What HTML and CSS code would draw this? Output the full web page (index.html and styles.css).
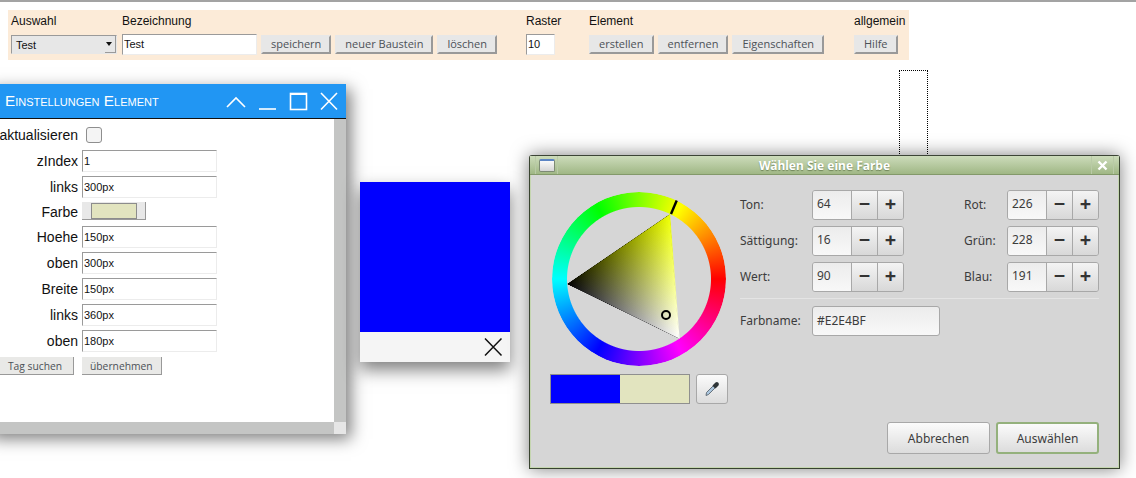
FILE: index.html
```html
<!DOCTYPE html>
<html lang="de">
<head>
    <meta charset="UTF-8">
    <title>Baustein Editor</title>
    <link rel="stylesheet" href="styles.css">
</head>
<body>
    <div class="toolbar">
        <div class="tool-group group-select">
            <label class="tool-label">Auswahl</label>
            <div class="fake-select">Test<span class="select-arrow"></span></div>
        </div>
        <div class="tool-group group-name">
            <label class="tool-label">Bezeichnung</label>
            <div class="tool-row">
                <input class="tool-input name-input" type="text" value="Test">
                <button class="tool-btn">speichern</button>
                <button class="tool-btn">neuer Baustein</button>
                <button class="tool-btn">löschen</button>
            </div>
        </div>
        <div class="tool-group group-raster">
            <label class="tool-label">Raster</label>
            <input class="tool-input raster-input" type="text" value="10">
        </div>
        <div class="tool-group group-element">
            <label class="tool-label">Element</label>
            <div class="tool-row">
                <button class="tool-btn">erstellen</button>
                <button class="tool-btn">entfernen</button>
                <button class="tool-btn">Eigenschaften</button>
            </div>
        </div>
        <div class="tool-group">
            <label class="tool-label">allgemein</label>
            <button class="tool-btn">Hilfe</button>
        </div>
    </div>

    <div class="dotted-box"></div>

    <div class="settings-win">
        <div class="settings-title">
            <span class="settings-name">Einstellungen Element</span>
            <svg class="win-icons" width="118" height="24" viewBox="0 0 118 24" fill="none" stroke="#fff" stroke-width="1.6">
                <path d="M7 18 L16 9 L25 18"/>
                <path d="M39 20 H56"/>
                <rect x="70.5" y="4.5" width="16" height="16"/>
                <path d="M70.5 5 H86.5" stroke-width="2"/>
                <path d="M101 4 L117 20.5 M117 4 L101 20.5"/>
            </svg>
        </div>
        <div class="settings-main">
            <div class="settings-body">
                <div class="prop-row row-first"><span class="prop-label">aktualisieren</span><span class="fake-check"></span></div>
                <div class="prop-row"><span class="prop-label">zIndex</span><input class="prop-input" type="text" value="1"></div>
                <div class="prop-row"><span class="prop-label">links</span><input class="prop-input" type="text" value="300px"></div>
                <div class="prop-row row-color"><span class="prop-label">Farbe</span><span class="color-btn"><span class="color-fill"></span></span></div>
                <div class="prop-row"><span class="prop-label">Hoehe</span><input class="prop-input" type="text" value="150px"></div>
                <div class="prop-row"><span class="prop-label">oben</span><input class="prop-input" type="text" value="300px"></div>
                <div class="prop-row"><span class="prop-label">Breite</span><input class="prop-input" type="text" value="150px"></div>
                <div class="prop-row"><span class="prop-label">links</span><input class="prop-input" type="text" value="360px"></div>
                <div class="prop-row"><span class="prop-label">oben</span><input class="prop-input" type="text" value="180px"></div>
                <div class="prop-actions">
                    <button class="flat-btn tag-btn">Tag suchen</button>
                    <button class="flat-btn">übernehmen</button>
                </div>
            </div>
            <div class="scroll-v"></div>
        </div>
        <div class="scroll-h"><span class="scroll-corner"></span></div>
    </div>

    <div class="element-win">
        <div class="element-color"></div>
        <div class="element-foot">
            <svg width="20" height="20" viewBox="0 0 20 20" fill="none" stroke="#111" stroke-width="1.5"><path d="M2 1.5 L18.5 18.5 M18.5 1.5 L2 18.5"/></svg>
        </div>
    </div>

    <div class="color-dialog">
        <div class="dialog-title">
            <span class="dialog-iconbox"><span class="dialog-appicon"></span></span>
            <span class="dialog-name">Wählen Sie eine Farbe</span>
            <span class="dialog-close">
                <svg width="11" height="11" viewBox="0 0 11 11" fill="none" stroke="#fff" stroke-width="2.4"><path d="M1.5 1.5 L9.5 9.5 M9.5 1.5 L1.5 9.5"/></svg>
            </span>
        </div>
        <div class="dialog-body">
            <div class="dialog-top">
                <div class="wheel-col">
                    <div class="wheel">
                        <div class="wheel-ring"></div>
                        <svg class="wheel-svg" width="174" height="174" viewBox="552 192 174 174">
                            <defs>
                                <linearGradient id="hueFade" gradientUnits="userSpaceOnUse" x1="669.5" y1="214.5" x2="622.4" y2="310.8">
                                    <stop offset="0" stop-color="#eeff00"/>
                                    <stop offset="1" stop-color="#000"/>
                                </linearGradient>
                                <linearGradient id="whiteFade" gradientUnits="userSpaceOnUse" x1="679" y1="338.5" x2="618.3" y2="249.4">
                                    <stop offset="0" stop-color="#fff"/>
                                    <stop offset="1" stop-color="#000"/>
                                </linearGradient>
                                <linearGradient id="edgeFade" gradientUnits="userSpaceOnUse" x1="669.5" y1="214.5" x2="679" y2="338.5">
                                    <stop offset="0" stop-color="#eeff00"/>
                                    <stop offset="1" stop-color="#fff"/>
                                </linearGradient>
                            </defs>
                            <g class="tri-group">
                                <polygon points="669.5,214.5 567.5,284 679,338.5" fill="url(#hueFade)"/>
                                <polygon class="plus-layer" points="669.5,214.5 567.5,284 679,338.5" fill="url(#whiteFade)"/>
                            </g>
                            <path d="M669.5 214.5 L679 338.5" stroke="url(#edgeFade)" stroke-width="1.2" fill="none"/>
                            <path d="M676.7 200.5 L671 214" stroke="#000" stroke-width="2.4"/>
                            <circle cx="666" cy="315" r="4" fill="none" stroke="#000" stroke-width="2"/>
                        </svg>
                    </div>
                    <div class="preview-row">
                        <div class="preview"><span class="preview-old"></span><span class="preview-new"></span></div>
                        <button class="gtk-btn picker-btn">
                            <svg width="18" height="18" viewBox="0 0 18 18">
                                <path d="M3 15.5 L3.5 12.5 L10 6 L12 8 L5.5 14.5 Z" fill="#a9c4dc" stroke="#5b6670" stroke-width="0.9"/>
                                <path d="M9.5 5.5 L12.5 2.5 Q14 1.5 15.3 2.7 Q16.5 4 15.5 5.5 L12.5 8.5 Z" fill="#2e3436"/>
                            </svg>
                        </button>
                    </div>
                </div>
                <div class="fields">
                    <div class="spin-grid">
                        <span class="field-label">Ton:</span>
                        <div class="spin"><span class="spin-value">64</span><span class="spin-btn">−</span><span class="spin-btn">+</span></div>
                        <span class="field-label label-right">Rot:</span>
                        <div class="spin"><span class="spin-value">226</span><span class="spin-btn">−</span><span class="spin-btn">+</span></div>
                        <span class="field-label">Sättigung:</span>
                        <div class="spin"><span class="spin-value">16</span><span class="spin-btn">−</span><span class="spin-btn">+</span></div>
                        <span class="field-label label-right">Grün:</span>
                        <div class="spin"><span class="spin-value">228</span><span class="spin-btn">−</span><span class="spin-btn">+</span></div>
                        <span class="field-label">Wert:</span>
                        <div class="spin"><span class="spin-value">90</span><span class="spin-btn">−</span><span class="spin-btn">+</span></div>
                        <span class="field-label label-right">Blau:</span>
                        <div class="spin"><span class="spin-value">191</span><span class="spin-btn">−</span><span class="spin-btn">+</span></div>
                    </div>
                    <div class="field-sep"></div>
                    <div class="name-row">
                        <span class="field-label">Farbname:</span>
                        <span class="name-field">#E2E4BF</span>
                    </div>
                </div>
            </div>
            <div class="dialog-actions">
                <button class="gtk-btn action-btn">Abbrechen</button>
                <button class="gtk-btn action-btn action-default">Auswählen</button>
            </div>
        </div>
    </div>
</body>
</html>
```
FILE: styles.css
```css
html, body {
    margin: 0;
    padding: 0;
    height: 478px;
    overflow: hidden;
}
body {
    position: relative;
    background-color: #fff;
    font-family: "Liberation Sans", Arial, sans-serif;
    border-top: 2px solid #a3a3a3;
    box-sizing: border-box;
}

/* toolbar */
.toolbar {
    display: flex;
    width: 901px;
    height: 50px;
    margin: 8px 0 0 8px;
    background-color: #fcebd8;
    color: #111;
    font-size: 12px;
}
.tool-group {
    display: flex;
    flex-direction: column;
    align-items: flex-start;
    padding-top: 4px;
}
.group-select { width: 114px; padding-left: 3px; box-sizing: border-box; }
.group-name { width: 404px; }
.group-raster { width: 63px; }
.group-element { width: 265px; }
.tool-label {
    height: 17px;
    line-height: 14px;
    margin-bottom: 3px;
}
.tool-row {
    display: flex;
    gap: 4px;
    align-items: flex-start;
}
.fake-select {
    position: relative;
    width: 106px;
    height: 19px;
    margin-top: 1px;
    padding-left: 4px;
    box-sizing: border-box;
    background-color: #e7e7e7;
    border: 1px solid;
    border-color: #9a9a9a #e7e7e7 #e7e7e7 #9a9a9a;
    line-height: 18px;
    font-size: 11px;
}
.select-arrow {
    position: absolute;
    right: 0;
    top: 0;
    width: 11px;
    height: 17px;
    background-color: #e7e7e7;
    border-right: 1px solid #9a9a9a;
    border-bottom: 1px solid #9a9a9a;
    box-sizing: border-box;
}
.select-arrow::after {
    content: "";
    position: absolute;
    left: 1px;
    top: 6px;
    border: 3px solid transparent;
    border-top: 4px solid #111;
    border-bottom: 0;
}
.tool-input {
    box-sizing: border-box;
    height: 21px;
    padding: 0 1px 1px;
    background-color: #fff;
    border: 1px solid;
    border-color: #9a9a9a #ececec #ececec #9a9a9a;
    font-family: inherit;
    font-size: 11px;
    color: #111;
    outline: none;
}
.name-input { width: 135px; }
.raster-input { width: 29px; }
.tool-btn {
    height: 19px;
    margin-top: 1px;
    padding: 0 8px 1px;
    background-color: #e7e7e7;
    border: 2px solid;
    border-color: #e7e7e7 #999 #999 #e7e7e7;
    font-family: "Open Sans", sans-serif;
    font-size: 11px;
    line-height: 14px;
    color: #4c5157;
}

/* dotted placeholder behind the dialog */
.dotted-box {
    position: absolute;
    left: 899px;
    top: 68px;
    width: 27px;
    height: 100px;
    border: 1px dotted #000;
}

/* settings window */
.settings-win {
    position: absolute;
    left: -14px;
    top: 82px;
    width: 360px;
    height: 350px;
    background-color: #fff;
    box-shadow: 5px 5px 15px rgba(0, 0, 0, 0.5);
}
.settings-title {
    display: flex;
    align-items: center;
    justify-content: space-between;
    height: 35px;
    padding: 0 8px 0 19px;
    background-color: #2196f3;
    border-bottom: 1px solid #111;
    box-sizing: border-box;
    color: #fff;
}
.settings-name {
    font-size: 15.3px;
    font-variant: small-caps;
}
.settings-main {
    display: flex;
    height: 303px;
}
.settings-body {
    flex: 1;
    padding-top: 2px;
    color: #111;
}
.scroll-v {
    width: 12px;
    background-color: #c4c5c4;
}
.scroll-h {
    display: flex;
    justify-content: flex-end;
    height: 12px;
    background-color: #c4c5c4;
}
.scroll-corner {
    width: 12px;
    background-color: #e6e6e6;
}
.prop-row {
    display: flex;
    align-items: center;
    height: 26px;
}
.row-first { height: 27px; }
.row-color { height: 24px; }
.prop-label {
    width: 92px;
    margin-right: 4px;
    text-align: right;
    font-size: 14px;
}
.prop-input {
    box-sizing: border-box;
    width: 135px;
    height: 22px;
    padding: 0 1px;
    background-color: #fff;
    border: 1px solid;
    border-color: #9a9a9a #ececec #ececec #9a9a9a;
    font-family: inherit;
    font-size: 11px;
    color: #111;
    outline: none;
}
.fake-check {
    width: 14px;
    height: 14px;
    margin-left: 4px;
    background-color: #f4f4f4;
    border: 1px solid #8e8e8e;
    border-radius: 3px;
}
.color-btn {
    display: flex;
    align-items: center;
    justify-content: center;
    box-sizing: border-box;
    width: 64px;
    height: 18px;
    margin-bottom: 2px;
    background-color: #e8e8e8;
    border-right: 1px solid #999;
    border-bottom: 1px solid #999;
}
.color-fill {
    box-sizing: border-box;
    width: 46px;
    height: 16px;
    background-color: #e2e4bf;
    border: 1px solid #8c8c8c;
}
.prop-actions {
    display: flex;
    gap: 8px;
    margin: 3px 0 0 0;
    padding-left: 11px;
}
.flat-btn {
    height: 18px;
    padding: 0 8px;
    background-color: #e9e9e7;
    border: 0;
    border-right: 1px solid #999;
    border-bottom: 1px solid #999;
    font-family: "Open Sans", sans-serif;
    font-size: 10.3px;
    color: #4c5157;
}
.tag-btn { width: 77px; padding: 0; }

/* the element being edited */
.element-win {
    position: absolute;
    left: 360px;
    top: 180px;
    width: 150px;
    height: 180px;
    box-shadow: 0 8px 16px rgba(0, 0, 0, 0.5);
}
.element-color {
    height: 150px;
    background-color: #00f;
}
.element-foot {
    display: flex;
    justify-content: flex-end;
    align-items: center;
    height: 30px;
    padding-right: 7px;
    background-color: #f5f5f5;
}

/* colour dialog */
.color-dialog {
    position: absolute;
    left: 529px;
    top: 153px;
    box-sizing: border-box;
    width: 591px;
    height: 314px;
    background-color: #d6d6d6;
    border: 1px solid #38432f;
    border-top-color: #3c4436;
    border-radius: 3px 3px 0 0;
    box-shadow: 0 0 18px rgba(0, 0, 0, 0.5), inset 0 0 0 1px #c5d6b0;
    font-family: "Noto Sans", sans-serif;
    font-size: 12px;
    color: #3c3c3c;
}
.dialog-title {
    display: flex;
    align-items: center;
    position: relative;
    height: 18px;
    background: linear-gradient(#cddcbb, #a0b785);
    border-bottom: 1px solid #83996a;
}
.dialog-iconbox {
    display: flex;
    align-items: center;
    justify-content: center;
    box-sizing: border-box;
    width: 23px;
    height: 18px;
    margin-left: 5px;
    border-left: 1px solid #b9caa6;
    border-right: 1px solid #b9caa6;
}
.dialog-appicon {
    box-sizing: border-box;
    width: 16px;
    height: 13px;
    background: linear-gradient(#fafafa, #d6d6d6);
    border: 1px solid #7d8a74;
    border-top: 2px solid #5b84c4;
    border-radius: 2px;
}
.dialog-name {
    position: absolute;
    left: 0;
    right: 0;
    text-align: center;
    font-weight: bold;
    font-size: 12px;
    color: #fff;
    text-shadow: 0 1px 1px #6f8458;
}
.dialog-close {
    display: flex;
    align-items: center;
    justify-content: center;
    position: absolute;
    right: 5px;
    top: 0;
    width: 23px;
    height: 18px;
    border-left: 1px solid #b9caa6;
    border-right: 1px solid #b9caa6;
    box-sizing: border-box;
}
.dialog-body {
    display: flex;
    flex-direction: column;
    height: 293px;
}
.dialog-top {
    display: flex;
    height: 244px;
}
.wheel-col {
    width: 210px;
    padding: 17px 0 0 22px;
    box-sizing: border-box;
}
.wheel {
    position: relative;
    width: 174px;
    height: 174px;
}
.wheel-ring {
    width: 174px;
    height: 174px;
    border-radius: 50%;
    background: conic-gradient(from 90deg, #f00, #f0f, #00f, #0ff, #0f0, #ff0, #f00);
    -webkit-mask: radial-gradient(circle, transparent 71.5px, #000 72.5px);
    mask: radial-gradient(circle, transparent 71.5px, #000 72.5px);
}
.wheel-svg {
    position: absolute;
    left: 0;
    top: 0;
}
.tri-group {
    isolation: isolate;
}
.plus-layer {
    mix-blend-mode: plus-lighter;
}
.preview-row {
    display: flex;
    gap: 6px;
    margin: 8px 0 0 -2px;
}
.preview {
    display: flex;
    box-sizing: border-box;
    width: 140px;
    height: 30px;
    border: 1px solid #8f8f8f;
}
.preview-old { width: 69px; background-color: #00f; }
.preview-new { flex: 1; background-color: #e2e4bf; }
.gtk-btn {
    background: linear-gradient(#fbfbfb, #dcdcdc);
    border: 1px solid #a8a8a8;
    border-radius: 3px;
    font-family: inherit;
    font-size: 12px;
    color: #3c3c3c;
    padding: 0;
}
.picker-btn {
    display: flex;
    align-items: center;
    justify-content: center;
    width: 32px;
    height: 30px;
}
.fields {
    width: 359px;
    padding: 15px 0 0 0;
    box-sizing: border-box;
}
.spin-grid {
    display: grid;
    grid-template-columns: 72px 92px 103px 92px;
    grid-auto-rows: 30px;
    row-gap: 6px;
    align-items: center;
}
.field-label {
    padding-bottom: 2px;
    font-size: 12px;
}
.label-right {
    padding-left: 60px;
}
.spin {
    display: flex;
    box-sizing: border-box;
    height: 30px;
    border: 1px solid #a8a8a8;
    border-radius: 3px;
    overflow: hidden;
}
.spin-value {
    flex: 1;
    padding-left: 4px;
    line-height: 25px;
    background: linear-gradient(#ececec, #f8f8f8);
    font-size: 12px;
}
.spin-btn {
    box-sizing: border-box;
    width: 26px;
    text-align: center;
    background: linear-gradient(#f4f4f4, #d8d8d8);
    border-left: 1px solid #a8a8a8;
    font-size: 20px;
    font-weight: bold;
    line-height: 26px;
    color: #333;
}
.field-sep {
    height: 1px;
    margin: 6px 0 7px;
    background-color: #e4e4e4;
}
.name-row {
    display: flex;
    align-items: center;
}
.name-row .field-label { width: 72px; }
.name-field {
    box-sizing: border-box;
    width: 128px;
    height: 30px;
    padding-left: 4px;
    line-height: 27px;
    background: linear-gradient(#ececec, #f8f8f8);
    border: 1px solid #a8a8a8;
    border-radius: 3px;
}
.dialog-actions {
    display: flex;
    justify-content: flex-end;
    gap: 6px;
    padding: 3px 20px 0 0;
}
.action-btn {
    width: 103px;
    height: 32px;
}
.action-default {
    border: 2px solid #94b17c;
}
```
